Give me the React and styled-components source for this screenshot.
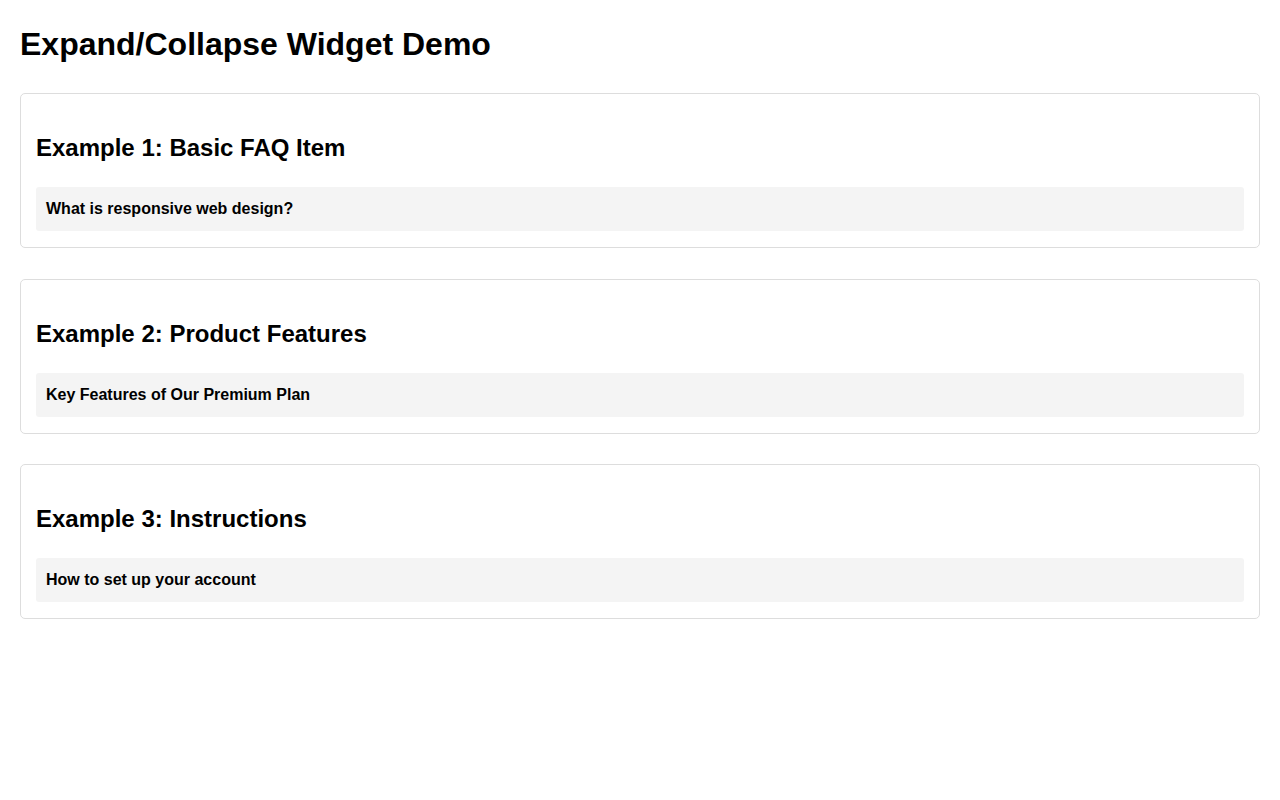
import React from "react";
import styled, { createGlobalStyle } from "styled-components";

const GlobalStyle = createGlobalStyle`
  body {
    margin: 0;
    background: #fff;
    color: #000;
    font-family: "Liberation Sans", Arial, sans-serif;
    line-height: 1.5;
  }
`;

const examples = [
  { title: "Example 1: Basic FAQ Item", summary: "What is responsive web design?" },
  { title: "Example 2: Product Features", summary: "Key Features of Our Premium Plan" },
  { title: "Example 3: Instructions", summary: "How to set up your account" },
];

function App() {
  return (
    <Page>
      <GlobalStyle />
      <Title>Expand/Collapse Widget Demo</Title>
      {examples.map((ex) => (
        <Card key={ex.title}>
          <CardTitle>{ex.title}</CardTitle>
          <Widget>
            <Summary>{ex.summary}</Summary>
          </Widget>
        </Card>
      ))}
    </Page>
  );
}

export default App;

const Page = styled.div`
  padding: 20px;
`;

const Title = styled.h1`
  font-size: 32px;
  font-weight: bold;
  margin: 0 0 25px;
`;

const Card = styled.section`
  border: 1px solid #ddd;
  border-radius: 5px;
  padding: 15px 15px 16px;
  margin-bottom: 30.5px;
`;

const CardTitle = styled.h2`
  font-size: 24px;
  font-weight: bold;
  margin: 21px 0;
`;

const Widget = styled.details`
  border-radius: 3px;
`;

const Summary = styled.summary`
  display: block;
  list-style: none;
  background: #f4f4f4;
  border-radius: 3px;
  padding: 10px;
  font-size: 16px;
  font-weight: bold;
  cursor: pointer;
  &::-webkit-details-marker {
    display: none;
  }
`;
